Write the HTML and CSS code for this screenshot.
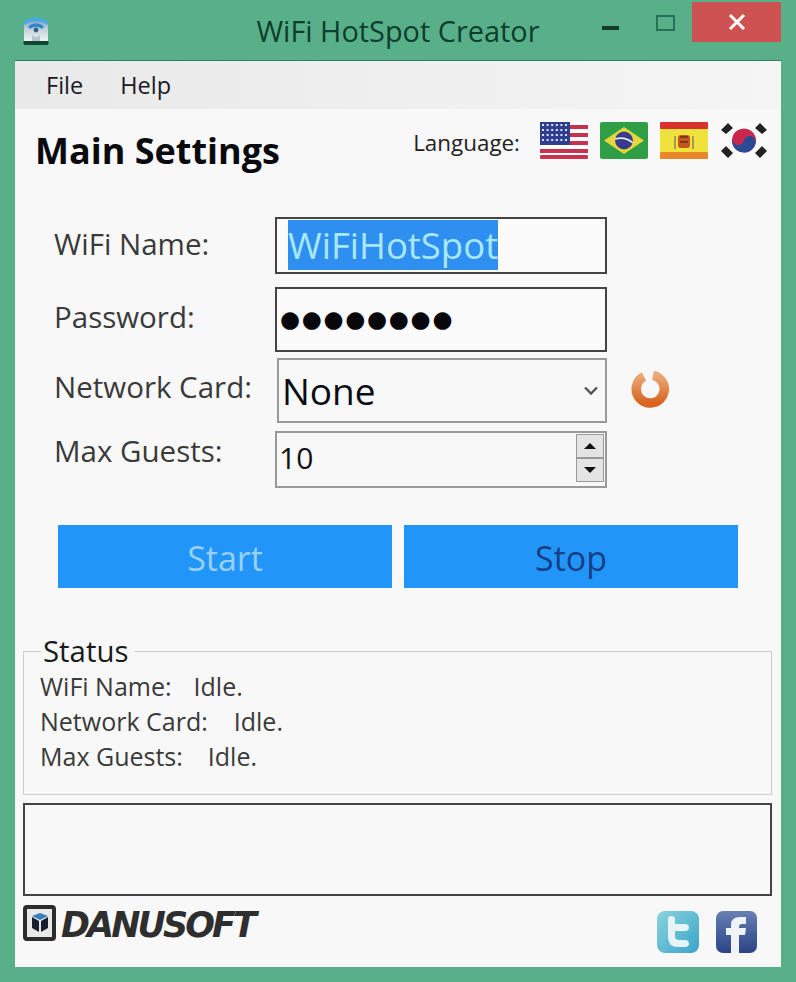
FILE: index.html
```html
<!DOCTYPE html>
<html lang="en">
<head>
  <meta charset="UTF-8">
  <meta name="viewport" content="width=device-width, initial-scale=1.0">
  <title>WiFi HotSpot Creator</title>
  <link rel="stylesheet" href="styles.css">
</head>
<body>
  <header class="titlebar">
    <div class="app-icon">
      <svg width="26" height="29" viewBox="0 0 26 29">
        <defs>
          <linearGradient id="drive" x1="0" y1="0" x2="0" y2="1">
            <stop offset="0" stop-color="#6f9dbc"/>
            <stop offset="0.5" stop-color="#c4d4dc"/>
            <stop offset="1" stop-color="#f0f2f0"/>
          </linearGradient>
        </defs>
        <path d="M1 8 Q13 -3 25 8 L25 25 L1 25 Z" fill="url(#drive)"/>
        <path d="M0.500 6 Q13 -3 25.500 6 L24 9 Q13 1 2 9 Z" fill="#46a8e8"/>
        <path d="M5 10.500 Q13 4 21 10.500 L19 13 Q13 8.500 7 13 Z" fill="#2f86cc"/>
        <circle cx="13" cy="14" r="2.400" fill="#34608a"/>
        <path d="M9 19 Q13 23 17 19 L17 25 L9 25 Z" fill="#b4c6ce"/>
        <rect x="0.500" y="25" width="25" height="4" rx="1" fill="#0f4636"/>
      </svg>
    </div>
    <div class="title">WiFi HotSpot Creator</div>
    <div class="window-controls">
      <span class="win-min"></span>
      <span class="win-max"></span>
      <span class="win-close">
        <svg width="18" height="18" viewBox="0 0 18 18"><path d="M2 2 L16 16 M16 2 L2 16" stroke="#fff" stroke-width="3"/></svg>
      </span>
    </div>
  </header>

  <div class="client">
    <nav class="menu">
      <span>File</span>
      <span>Help</span>
    </nav>

    <div class="heading-row">
      <h1>Main Settings</h1>
      <div class="language">
        <span class="language-label">Language:</span>
        <svg class="flag" viewBox="0 0 48 37">
          <rect width="48" height="37" rx="2" fill="#fff"/>
          <path d="M0 3h48v4H0zM0 11h48v4H0zM0 19h48v4H0zM0 27h48v4H0z" fill="#c8324e"/>
          <rect y="33" width="48" height="4" rx="1" fill="#c8324e"/>
          <rect width="30" height="23" fill="#2f3f8f"/>
          <path d="M2 3h26M2 8h26M2 13h26M2 18h26" stroke="#dfe4f5" stroke-width="2" stroke-dasharray="2 2.600"/>
        </svg>
        <svg class="flag" viewBox="0 0 48 37">
          <rect width="48" height="37" rx="2" fill="#2f9e45"/>
          <path d="M24 5 L44 18.500 L24 32 L4 18.500 Z" fill="#e6d83a"/>
          <circle cx="24" cy="18.500" r="9" fill="#3a3a8c"/>
          <path d="M15 17 Q25 14 33 21" stroke="#e8e8e8" stroke-width="1.600" fill="none"/>
        </svg>
        <svg class="flag" viewBox="0 0 48 37">
          <rect width="48" height="37" rx="2" fill="#f0e23c"/>
          <rect width="48" height="7" rx="1" fill="#d8322e"/>
          <rect y="30" width="48" height="7" rx="1" fill="#e8862a"/>
          <rect x="18" y="13" width="12" height="13" rx="3" fill="#c8541e"/>
          <path d="M15 14v13M33 14v13" stroke="#a89a50" stroke-width="2"/>
          <path d="M20 15h8M20 20h8" stroke="#7a3a1a" stroke-width="2"/>
        </svg>
        <svg class="flag" viewBox="0 0 48 37">
          <rect width="48" height="37" rx="2" fill="#fafafa"/>
          <path d="M1 8 L8 1 L13 6 L6 12 Z M35 6 L40 1 L47 8 L42 12 Z M1 29 L6 24 L13 31 L8 36 Z M35 31 L42 24 L47 29 L40 36 Z" fill="#222"/>
          <g transform="rotate(15 24 18.500)">
            <circle cx="24" cy="18.500" r="12" fill="#c8284e"/>
            <path d="M12 18.500 A6 6 0 0 0 24 18.500 A6 6 0 0 1 36 18.500 A12 12 0 0 1 12 18.500 Z" fill="#2a4a96"/>
          </g>
        </svg>
      </div>
    </div>

    <form class="settings">
      <label class="row-name">WiFi Name:</label>
      <div class="field field-name"><span class="selected-text">WiFiHotSpot</span></div>

      <label class="row-pass">Password:</label>
      <div class="field field-pass">●●●●●●●●</div>

      <label class="row-card">Network Card:</label>
      <div class="card-wrap">
        <div class="combo">
          <span>None</span>
          <svg width="14" height="10" viewBox="0 0 14 10"><path d="M1 1.500 L7 7.500 L13 1.500" fill="none" stroke="#555" stroke-width="2.400"/></svg>
        </div>
        <svg class="refresh" width="38" height="38" viewBox="0 0 38 38">
          <defs>
            <linearGradient id="ring" x1="0" y1="0" x2="0" y2="1">
              <stop offset="0" stop-color="#eba878"/>
              <stop offset="1" stop-color="#d8641e"/>
            </linearGradient>
          </defs>
          <path d="M13 6.500 A14 14 0 1 0 22 5.300" fill="none" stroke="url(#ring)" stroke-width="9.500"/>
        </svg>
      </div>

      <label class="row-max">Max Guests:</label>
      <div class="field-spin">
        <span>10</span>
        <div class="spin">
          <button type="button"><i class="arrow-up"></i></button>
          <button type="button"><i class="arrow-down"></i></button>
        </div>
      </div>
    </form>

    <div class="actions">
      <button type="button" class="button button-start">Start</button>
      <button type="button" class="button button-stop">Stop</button>
    </div>

    <fieldset class="status">
      <legend>Status</legend>
      <div class="status-row"><span class="status-key">WiFi Name:</span><span class="idle-a">Idle.</span></div>
      <div class="status-row"><span class="status-key">Network Card:</span><span class="idle-b">Idle.</span></div>
      <div class="status-row"><span class="status-key">Max Guests:</span><span class="idle-c">Idle.</span></div>
    </fieldset>

    <div class="log"></div>

    <footer class="footer">
      <div class="logo">
        <svg width="33" height="36" viewBox="0 0 33 36">
          <rect x="2" y="2" width="29" height="32" rx="2" fill="#e8e8e8" stroke="#2c2c2c" stroke-width="4"/>
          <path d="M9 11 L17 8 L25 11 L17 15 Z" fill="#3a7cc0"/>
          <path d="M9 12 L16 16 L16 27 L9 23 Z" fill="#15202c"/>
          <path d="M25 12 L18 16 L18 27 L25 23 Z" fill="#15202c"/>
        </svg>
        <span class="logo-text">DANUSOFT</span>
      </div>
      <div class="social">
        <svg width="42" height="42" viewBox="0 0 42 42">
          <defs>
            <linearGradient id="tw" x1="0" y1="0" x2="1" y2="1">
              <stop offset="0" stop-color="#8ad4de"/>
              <stop offset="1" stop-color="#3aa4c8"/>
            </linearGradient>
          </defs>
          <rect width="42" height="42" rx="8" fill="url(#tw)"/>
          <path d="M11 8 Q11 5 14.500 5 Q18 5 18 8 L18 13 L28 13 Q32 13 32 16.500 Q32 20 28 20 L18 20 L18 25 Q18 29 22 29 L28 29 Q32 29 32 32.500 Q32 36 28 36 L21 36 Q11 36 11 26 Z" fill="#e6f4f6"/>
        </svg>
        <svg width="41" height="42" viewBox="0 0 41 42">
          <defs>
            <linearGradient id="fb" x1="0" y1="0" x2="0" y2="1">
              <stop offset="0" stop-color="#6a80b4"/>
              <stop offset="0.45" stop-color="#4a64a0"/>
              <stop offset="1" stop-color="#2c4484"/>
            </linearGradient>
          </defs>
          <rect width="41" height="42" rx="7" fill="url(#fb)"/>
          <path d="M15 42 L15 24 L10 24 L10 17 L15 17 L15 14 Q15 6 24 6 L30 6 L30 13 L26 13 Q23 13 23 16 L23 17 L30 17 L29 24 L23 24 L23 42 Z" fill="#f0f2f8"/>
        </svg>
      </div>
    </footer>
  </div>
</body>
</html>
```

FILE: styles.css
```css
body {
  font-family: "Open Sans", "Noto Sans", sans-serif;
  margin: 0;
  padding: 0;
  background-color: #58b088;
  color: #222;
}
.titlebar {
  height: 60px;
  display: grid;
  grid-template-columns: 1fr auto 1fr;
}
.app-icon {
  padding: 16px 0 0 23px;
}
.title {
  font-size: 28.9px;
  line-height: 62px;
  color: #0e3d2e;
}
.window-controls {
  display: flex;
  justify-content: flex-end;
  align-items: flex-start;
  padding-right: 15px;
}
.win-min {
  width: 17px;
  height: 4px;
  margin: 26px 37px 0 0;
  background: #123c2c;
}
.win-max {
  width: 15px;
  height: 12px;
  margin: 15px 17px 0 0;
  border: 2px solid #2a7058;
}
.win-close {
  width: 89px;
  height: 40px;
  margin-top: 2px;
  background: #cf5252;
  display: flex;
  align-items: center;
  justify-content: center;
}
.client {
  margin: 0 15px;
  height: 907px;
  box-sizing: border-box;
  background-color: #f8f8f8;
  border-top: 1px solid #2f7c5e;
  overflow: hidden;
}
.menu {
  height: 48px;
  background: linear-gradient(to right, #e9e9e9, #f5f5f5);
  display: flex;
  align-items: center;
  gap: 37px;
  padding-left: 31px;
  font-size: 23.5px;
  color: #1a1a24;
}
.heading-row {
  display: flex;
  justify-content: space-between;
  align-items: flex-start;
  padding: 13px 13px 0 20px;
}
h1 {
  margin: 0;
  font-size: 36px;
  line-height: 58px;
  color: #0a0a0e;
}
.language {
  display: flex;
  align-items: center;
  gap: 12px;
}
.language-label {
  font-size: 22.4px;
  margin: 3px 8px 0 0;
}
.flag {
  width: 48px;
  height: 37px;
}
.settings {
  display: grid;
  grid-template-columns: 220px 440px;
  grid-template-rows: 70px 71px 73px 60px;
  margin: 37px 0 0 40px;
}
.settings label {
  font-size: 29.5px;
  line-height: 40px;
  margin-left: -1px;
  color: #3a3a3a;
}
.row-name { padding-top: 7px; }
.row-pass { padding-top: 10px; }
.row-card { padding-top: 9px; }
.row-max { padding-top: 0; }
.field {
  box-sizing: border-box;
  width: 332px;
  border: 2px solid #444;
  background: #fbfbfb;
}
.field-name {
  height: 57px;
  padding: 1px 0 0 11px;
  font-size: 36.5px;
  line-height: 50px;
}
.selected-text {
  display: inline-block;
  background: #2f8ff0;
  color: #a8e8ff;
}
.field-pass {
  height: 65px;
  padding-left: 3px;
  font-family: "DejaVu Sans", sans-serif;
  font-size: 23px;
  letter-spacing: 1.700px;
  line-height: 60px;
  color: #08080c;
}
.card-wrap {
  display: flex;
  align-items: flex-start;
  gap: 24px;
  margin-left: 2px;
}
.combo {
  box-sizing: border-box;
  flex: none;
  width: 330px;
  height: 65px;
  border: 2px solid #999;
  display: flex;
  align-items: center;
  justify-content: space-between;
  padding: 0 7px 0 3px;
  font-size: 37px;
  color: #0c0c14;
}
.refresh {
  flex: none;
  margin-top: 12px;
}
.field-spin {
  box-sizing: border-box;
  width: 332px;
  height: 57px;
  border: 2px solid #999;
  display: flex;
  justify-content: space-between;
  padding: 1px 1px 0 2px;
  font-size: 30px;
  line-height: 48px;
  color: #111;
}
.spin {
  display: flex;
  flex-direction: column;
  width: 28px;
}
.spin button {
  height: 24px;
  padding: 0;
  border: 1px solid #999;
  background: #e4e4e4;
  display: flex;
  align-items: center;
  justify-content: center;
}
.arrow-up {
  border: 6px solid transparent;
  border-top: 0;
  border-bottom: 6px solid #111;
}
.arrow-down {
  border: 6px solid transparent;
  border-bottom: 0;
  border-top: 6px solid #111;
}
.actions {
  display: flex;
  gap: 12px;
  margin: 34px 0 0 43px;
}
.button {
  width: 334px;
  height: 63px;
  padding: 2px 0 0;
  border: none;
  background-color: #2196f8;
  font-family: inherit;
  font-size: 34px;
}
.button-start {
  color: #9ad0f4;
}
.button-stop {
  color: #173f86;
}
.status {
  box-sizing: border-box;
  width: 749px;
  height: 162px;
  margin: 45px 0 0 8px;
  padding: 0 0 0 16px;
  border: 1px solid #ccc;
  min-width: 0;
}
.status legend {
  font-size: 29.4px;
  line-height: 36px;
  padding: 0 7px 0 2px;
  margin-left: 1px;
  color: #1a1a1a;
}
.status-row {
  font-size: 25px;
  line-height: 35px;
  color: #3a3a3a;
  display: flex;
}
.idle-a { margin-left: 22px; }
.idle-b { margin-left: 26px; }
.idle-c { margin-left: 25px; }
.log {
  box-sizing: border-box;
  width: 749px;
  height: 93px;
  margin: 8px 0 0 8px;
  border: 2px solid #444;
}
.footer {
  display: flex;
  justify-content: space-between;
  align-items: flex-start;
  padding: 5px 24px 0 8px;
}
.logo {
  display: flex;
  align-items: center;
}
.logo-text {
  display: inline-block;
  font-family: "DejaVu Sans", sans-serif;
  font-weight: bold;
  font-style: italic;
  font-size: 36px;
  letter-spacing: -3px;
  color: #2e2e2e;
  transform-origin: left center;
  transform: scaleX(0.97);
  margin: 3px 0 0 5px;
}
.social {
  display: flex;
  gap: 17px;
  padding-top: 10px;
}
```
